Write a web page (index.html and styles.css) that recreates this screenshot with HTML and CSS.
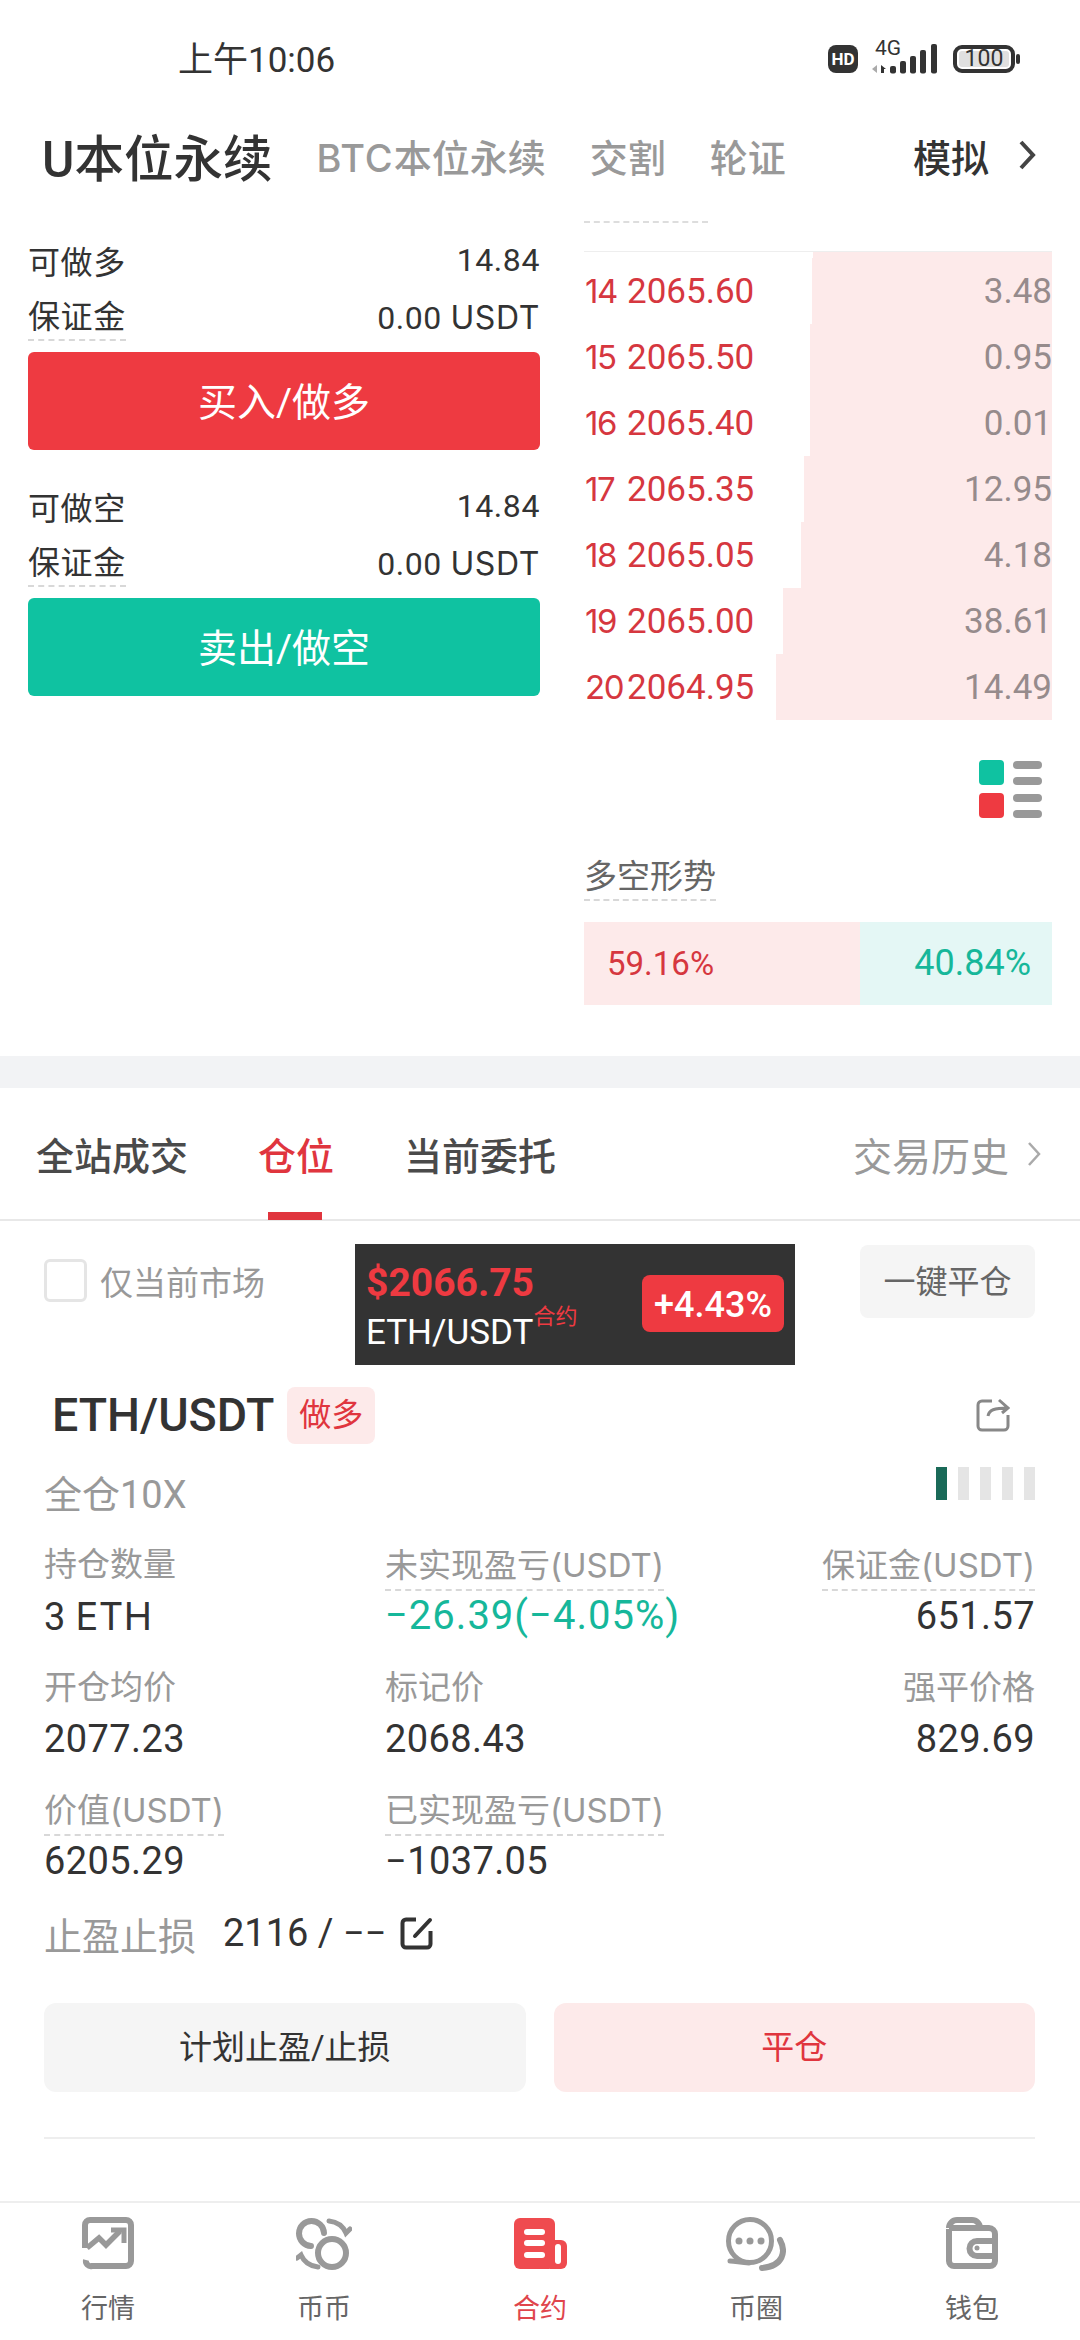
FILE: index.html
```html
<!DOCTYPE html>
<html lang="en">
<head>
    <meta charset="UTF-8">
    <meta name="viewport" content="width=device-width, initial-scale=1.0">
    <title>合约</title>
    <link rel="stylesheet" href="styles.css">
</head>
<body>
    <div class="status-bar">
        <span class="time">上午10:06</span>
        <div class="status-icons">
            <span class="hd">HD</span>
            <div class="signal">
                <span class="signal-text">4G</span>
                <svg width="66" height="34" viewBox="0 0 66 34">
                    <polygon points="0,29 5,25 5,33" fill="#aaa"/>
                    <polygon points="9,25 14,29 12,29 12,33 9,33" fill="#333"/>
                    <rect x="18" y="26" width="6" height="7.5" rx="2" fill="#333"/>
                    <rect x="28" y="21" width="6" height="12.5" rx="2" fill="#333"/>
                    <rect x="38" y="16" width="6" height="17.5" rx="2" fill="#333"/>
                    <rect x="48" y="10" width="6" height="23.5" rx="2" fill="#333"/>
                    <rect x="59" y="4" width="6" height="29.5" rx="2" fill="#333"/>
                </svg>
            </div>
            <div class="battery">
                <span class="battery-level">100</span>
            </div>
            <span class="battery-nub"></span>
        </div>
    </div>

    <div class="top-tabs">
        <span class="top-tab-main">U本位永续</span>
        <span class="top-tab"><span class="en">BTC</span>本位永续</span>
        <span class="top-tab">交割</span>
        <span class="top-tab">轮证</span>
        <span class="top-tab-demo">模拟</span>
        <svg class="top-chevron" width="18" height="32" viewBox="0 0 18 32">
            <path d="M3 3 L15 16 L3 29" fill="none" stroke="#444" stroke-width="4"/>
        </svg>
    </div>

    <div class="market">
        <div class="trade-col">
            <div class="trade-group">
                <div class="trade-row"><span>可做多</span><span>14.84</span></div>
                <div class="trade-row"><span class="dashed">保证金</span><span>0.00 <span class="en">USDT</span></span></div>
                <div class="trade-btn buy">买入/做多</div>
            </div>
            <div class="trade-group">
                <div class="trade-row"><span>可做空</span><span>14.84</span></div>
                <div class="trade-row"><span class="dashed">保证金</span><span>0.00 <span class="en">USDT</span></span></div>
                <div class="trade-btn sell">卖出/做空</div>
            </div>
        </div>

        <div class="book-col">
            <div class="book-stub"></div>
            <div class="book">
                <div class="book-sliver"><span class="depth" style="width: 239px"></span></div>
                <div class="book-row"><span class="depth" style="width: 240px"></span><span class="book-no">14</span><span class="book-price">2065.60</span><span class="book-qty">3.48</span></div>
                <div class="book-row"><span class="depth" style="width: 242px"></span><span class="book-no">15</span><span class="book-price">2065.50</span><span class="book-qty">0.95</span></div>
                <div class="book-row"><span class="depth" style="width: 242px"></span><span class="book-no">16</span><span class="book-price">2065.40</span><span class="book-qty">0.01</span></div>
                <div class="book-row"><span class="depth" style="width: 248px"></span><span class="book-no">17</span><span class="book-price">2065.35</span><span class="book-qty">12.95</span></div>
                <div class="book-row"><span class="depth" style="width: 251px"></span><span class="book-no">18</span><span class="book-price">2065.05</span><span class="book-qty">4.18</span></div>
                <div class="book-row"><span class="depth" style="width: 269px"></span><span class="book-no">19</span><span class="book-price">2065.00</span><span class="book-qty">38.61</span></div>
                <div class="book-row"><span class="depth" style="width: 276px"></span><span class="book-no">20</span><span class="book-price">2064.95</span><span class="book-qty">14.49</span></div>
            </div>
            <svg class="book-mode" width="63" height="58" viewBox="0 0 63 58">
                <rect x="0" y="0" width="25" height="25" rx="4" fill="#0fc2a1"/>
                <rect x="0" y="33" width="25" height="25" rx="4" fill="#ee3a41"/>
                <rect x="34" y="1" width="29" height="8" rx="4" fill="#999"/>
                <rect x="34" y="17" width="29" height="8" rx="4" fill="#999"/>
                <rect x="34" y="34" width="29" height="8" rx="4" fill="#999"/>
                <rect x="34" y="50" width="29" height="8" rx="4" fill="#999"/>
            </svg>
            <div class="trend-title"><span class="dashed">多空形势</span></div>
            <div class="trend-bar">
                <div class="trend-long" style="width: 276px">59.16%</div>
                <div class="trend-short">40.84%</div>
            </div>
        </div>
    </div>

    <div class="band"></div>

    <div class="order-tabs">
        <span class="order-tab">全站成交</span>
        <span class="order-tab active">仓位</span>
        <span class="order-tab">当前委托</span>
        <span class="order-history">交易历史</span>
        <svg class="history-chevron" width="14" height="26" viewBox="0 0 14 26">
            <path d="M2 2 L12 13 L2 24" fill="none" stroke="#aaa" stroke-width="2.5"/>
        </svg>
    </div>

    <div class="toolbar">
        <label class="only-market"><span class="checkbox"></span>仅当前市场</label>
        <!-- floating price ticker -->
        <div class="ticker">
            <div>
                <div class="ticker-price">$2066.75</div>
                <div class="ticker-name">ETH/USDT<sup>合约</sup></div>
            </div>
            <span class="ticker-change">+4.43%</span>
        </div>
        <span class="close-all">一键平仓</span>
    </div>

    <div class="position">
        <div class="pos-head">
            <span class="pos-name">ETH/USDT</span>
            <span class="pos-tag">做多</span>
            <svg class="pos-share" width="34" height="34" viewBox="0 0 34 34">
                <path d="M16 3 H6 a4 4 0 0 0 -4 4 V28 a4 4 0 0 0 4 4 H28 a4 4 0 0 0 4 -4 V17" fill="none" stroke="#888" stroke-width="3"/>
                <path d="M12 18 C13 12 18 10 32 10 M23 2 L32 10 L26 15" fill="none" stroke="#888" stroke-width="3"/>
            </svg>
        </div>
        <div class="pos-mode">
            <span>全仓10X</span>
            <div class="risk-bars">
                <span class="risk-bar on"></span>
                <span class="risk-bar"></span>
                <span class="risk-bar"></span>
                <span class="risk-bar"></span>
                <span class="risk-bar"></span>
            </div>
        </div>

        <div class="stats">
            <div class="stat">
                <div class="stat-label"><span>持仓数量</span></div>
                <div class="stat-value">3 <span class="en">ETH</span></div>
            </div>
            <div class="stat">
                <div class="stat-label"><span class="dashed">未实现盈亏<span class="en">(USDT)</span></span></div>
                <div class="stat-value green">−26.39(−4.05%)</div>
            </div>
            <div class="stat right">
                <div class="stat-label"><span class="dashed">保证金<span class="en">(USDT)</span></span></div>
                <div class="stat-value">651.57</div>
            </div>
            <div class="stat">
                <div class="stat-label"><span>开仓均价</span></div>
                <div class="stat-value">2077.23</div>
            </div>
            <div class="stat">
                <div class="stat-label"><span>标记价</span></div>
                <div class="stat-value">2068.43</div>
            </div>
            <div class="stat right">
                <div class="stat-label"><span>强平价格</span></div>
                <div class="stat-value">829.69</div>
            </div>
            <div class="stat">
                <div class="stat-label"><span class="dashed">价值<span class="en">(USDT)</span></span></div>
                <div class="stat-value">6205.29</div>
            </div>
            <div class="stat">
                <div class="stat-label"><span class="dashed">已实现盈亏<span class="en">(USDT)</span></span></div>
                <div class="stat-value">−1037.05</div>
            </div>
        </div>

        <div class="stop-row">
            <span class="stop-label">止盈止损</span>
            <span class="stop-value">2116 / −−</span>
            <svg width="33" height="33" viewBox="0 0 33 33">
                <path d="M16 2.5 H6 a3.5 3.5 0 0 0 -3.5 3.5 V27 a3.5 3.5 0 0 0 3.5 3.5 H27 a3.5 3.5 0 0 0 3.5 -3.5 V14" fill="none" stroke="#333" stroke-width="4"/>
                <path d="M15 19 L30 3" fill="none" stroke="#333" stroke-width="4" stroke-linecap="round"/>
            </svg>
        </div>

        <div class="pos-actions">
            <div class="pos-btn plan">计划止盈/止损</div>
            <div class="pos-btn close">平仓</div>
        </div>
        <div class="pos-divider"></div>
    </div>

    <div class="bottom-nav">
        <div class="nav-item">
            <svg width="52" height="54" viewBox="0 0 52 54">
                <path d="M3 31 V8 a5 5 0 0 1 5 -5 H44 a5 5 0 0 1 5 5 V44 a5 5 0 0 1 -5 5 H10 a5 5 0 0 1 -6 -6" fill="none" stroke="#999" stroke-width="6"/>
                <path d="M5 31 L17 21 L24 28 L38 14" fill="none" stroke="#999" stroke-width="5.5"/>
                <path d="M29 13 H42 V26" fill="none" stroke="#999" stroke-width="5"/>
            </svg>
            <span>行情</span>
        </div>
        <div class="nav-item">
            <svg width="56" height="54" viewBox="0 0 56 54">
                <circle cx="36" cy="36" r="14" fill="none" stroke="#999" stroke-width="6"/>
                <path d="M28 16 A12.5 12.5 0 1 0 15 29" fill="none" stroke="#999" stroke-width="6" stroke-linecap="round"/>
                <path d="M33 4 C42 5 47 9 50 16 L54 12" fill="none" stroke="#999" stroke-width="5" stroke-linecap="round"/>
                <path d="M22 50 C13 49 8 45 5 38 L1 41" fill="none" stroke="#999" stroke-width="5" stroke-linecap="round"/>
            </svg>
            <span>币币</span>
        </div>
        <div class="nav-item active">
            <svg width="53" height="54" viewBox="0 0 53 54">
                <rect x="0" y="1" width="41" height="51" rx="6" fill="#ef4b4f"/>
                <path d="M36 23 H47 a6 6 0 0 1 6 6 V46 a6 6 0 0 1 -6 6 H36 Z" fill="#ef4b4f"/>
                <rect x="10" y="12" width="21" height="6" rx="3" fill="#fff"/>
                <rect x="10" y="23" width="21" height="6" rx="3" fill="#fff"/>
                <rect x="10" y="35" width="21" height="6" rx="3" fill="#fff"/>
                <rect x="41" y="27" width="6" height="20" rx="3" fill="#fff"/>
            </svg>
            <span>合约</span>
        </div>
        <div class="nav-item">
            <svg width="60" height="54" viewBox="0 0 60 54">
                <circle cx="24" cy="24" r="21.5" fill="none" stroke="#999" stroke-width="5"/>
                <path d="M4 44 C10 44 15 46 23 46" fill="none" stroke="#999" stroke-width="5" stroke-linecap="round"/>
                <circle cx="13" cy="24" r="3.5" fill="#999"/>
                <circle cx="24" cy="24" r="3.5" fill="#999"/>
                <circle cx="35" cy="24" r="3.5" fill="#999"/>
                <path d="M54 23 C60 34 58 49 36 51" fill="none" stroke="#999" stroke-width="6" stroke-linecap="round"/>
            </svg>
            <span>币圈</span>
        </div>
        <div class="nav-item">
            <svg width="52" height="54" viewBox="0 0 52 54">
                <path d="M3 11 a8 8 0 0 1 8 -8 H26 a8 8 0 0 1 8 8" fill="none" stroke="#999" stroke-width="6"/>
                <path d="M3 12 V44 a5 5 0 0 0 5 5 H44 a5 5 0 0 0 5 -5 V17 a6 6 0 0 0 -6 -6 H3" fill="none" stroke="#999" stroke-width="6"/>
                <path d="M49 24 H31 a7.5 7.5 0 0 0 0 15 H49" fill="none" stroke="#999" stroke-width="6"/>
                <circle cx="31" cy="31" r="2.5" fill="#999"/>
            </svg>
            <span>钱包</span>
        </div>
    </div>
</body>
</html>
```

FILE: styles.css
```css
* {
    box-sizing: border-box;
}
body {
    margin: 0;
    width: 1080px;
    height: 2340px;
    overflow: hidden;
    display: flex;
    flex-direction: column;
    background: #fff;
    color: #333;
    font-family: Roboto, "Noto Sans CJK SC", sans-serif;
}
.dashed {
    display: inline-block;
    border-bottom: 2px dashed #d8d8d8;
}
/* capitals in the original run wider than Roboto */
.en {
    font-family: Inter, Roboto, sans-serif;
}

/* status bar */
.status-bar {
    height: 120px;
    padding: 40px 60px 0 178px;
    display: flex;
    justify-content: space-between;
    align-items: flex-start;
}
.time {
    font-size: 35px;
    line-height: 42px;
}
.status-icons {
    display: flex;
    align-items: flex-start;
}
.hd {
    width: 30px;
    height: 28px;
    margin-top: 5px;
    border-radius: 8px;
    background: #333;
    color: #fff;
    font-size: 17px;
    font-weight: 700;
    line-height: 28px;
    text-align: center;
}
.signal {
    position: relative;
    height: 34px;
    margin-left: 14px;
}
.signal svg {
    display: block;
}
.signal-text {
    position: absolute;
    left: 3px;
    top: 0;
    font-size: 21px;
    line-height: 17px;
}
.battery {
    width: 62px;
    height: 28px;
    margin: 5px 0 0 15px;
    padding: 2px;
    border: 4px solid #333;
    border-radius: 9px;
    display: flex;
}
.battery-level {
    flex: 1;
    background: #e0e0e0;
    border-radius: 3px;
    font-size: 23px;
    line-height: 16px;
    text-align: center;
}
.battery-nub {
    width: 4px;
    height: 10px;
    margin: 14px 0 0 1px;
    background: #333;
    border-radius: 2px;
}

/* top tabs */
.top-tabs {
    height: 80px;
    padding: 0 44px 10px 42px;
    display: flex;
    align-items: center;
    gap: 44px;
}
.top-tab-main {
    font-size: 49.5px;
    font-weight: 500;
}
.top-tab {
    font-size: 38px;
    font-weight: 500;
    color: #999;
}
.top-tab .en {
    letter-spacing: 1px;
}
.top-tab-demo {
    margin-left: auto;
    font-size: 38px;
    font-weight: 500;
}
.top-chevron {
    margin-left: -15px;
}

/* trade buttons + order book */
.market {
    height: 856px;
    padding: 0 28px;
    display: flex;
    justify-content: space-between;
}
.trade-col {
    width: 512px;
    padding-top: 32px;
}
.trade-group {
    margin-bottom: 28px;
}
.trade-row {
    height: 56px;
    display: flex;
    justify-content: space-between;
    align-items: center;
    font-size: 32px;
    letter-spacing: 0.6px;
}
.trade-row + .trade-row {
    padding-top: 3px;
}
.trade-row .dashed {
    line-height: 44px;
}
.trade-btn {
    height: 98px;
    margin-top: 8px;
    border-radius: 6px;
    color: #fff;
    font-size: 39px;
    line-height: 102px;
    text-align: center;
}
.buy {
    background: #ee3a41;
}
.sell {
    background: #0fc2a1;
}
.book-col {
    width: 468px;
}
.book-stub {
    width: 124px;
    height: 23px;
    border-bottom: 2px dashed #ddd;
}
.book {
    margin-top: 28px;
    border-top: 1px solid #eee;
}
.book-sliver {
    position: relative;
    height: 6px;
}
.book-row {
    position: relative;
    height: 66px;
    display: flex;
    align-items: center;
    font-size: 35px;
}
.depth {
    position: absolute;
    top: 0;
    right: 0;
    bottom: 0;
    background: #fdeaea;
}
.book-no,
.book-price,
.book-qty {
    position: relative;
}
.book-no {
    width: 43px;
    padding-left: 1px;
    font-family: Inter, Roboto, sans-serif;
    font-size: 33px;
    letter-spacing: -1.5px;
    color: #d6373f;
}
.book-price {
    color: #d6373f;
}
.book-qty {
    margin-left: auto;
    color: #968b8c;
}
.book-mode {
    display: block;
    margin: 40px 10px 0 auto;
}
.trend-title {
    height: 47px;
    margin-top: 36px;
    font-size: 33px;
    line-height: 45px;
    color: #666;
}
.trend-bar {
    height: 83px;
    margin-top: 21px;
    display: flex;
    font-size: 33px;
    line-height: 83px;
}
.trend-long {
    padding-left: 23px;
    background: #fdeaea;
    color: #d6373f;
}
.trend-short {
    flex: 1;
    padding-right: 21px;
    background: #e4f7f5;
    color: #16b79a;
    font-size: 36px;
    text-align: right;
}
.band {
    height: 32px;
    background: #f2f3f5;
}

/* position tabs */
.order-tabs {
    height: 133px;
    padding: 0 39px 0 36px;
    border-bottom: 2px solid #e8e8e8;
    display: flex;
    align-items: center;
    gap: 70px;
}
.order-tab {
    position: relative;
    font-size: 38px;
    font-weight: 500;
    color: #4a4a4a;
}
.order-tab.active {
    color: #e0353e;
}
.order-tab.active::after {
    content: "";
    position: absolute;
    left: 10px;
    right: 12px;
    bottom: -39px;
    height: 8px;
    background: #e0353e;
}
.order-history {
    margin-left: auto;
    font-size: 39px;
    color: #999;
}
.history-chevron {
    margin-left: -52px;
}

/* filter row */
.toolbar {
    position: relative;
    height: 159px;
    padding: 24px 45px 0 44px;
    display: flex;
    justify-content: space-between;
    align-items: flex-start;
}
.only-market {
    height: 71px;
    display: flex;
    align-items: center;
    gap: 13px;
    font-size: 33px;
    color: #999;
}
.checkbox {
    width: 43px;
    height: 43px;
    border: 3px solid #e5e5e5;
    border-radius: 6px;
}
.ticker {
    position: absolute;
    left: 355px;
    top: 23px;
    width: 440px;
    height: 121px;
    padding: 4px 11px 0 11px;
    background: #333;
    display: flex;
    justify-content: space-between;
    align-items: center;
}
.ticker-price {
    font-size: 39px;
    font-weight: 700;
    line-height: 52px;
    color: #ee3a41;
}
.ticker-name {
    font-size: 35px;
    line-height: 48px;
    color: #fff;
}
.ticker-name sup {
    font-size: 22px;
    line-height: 0;
    color: #ee3a41;
    vertical-align: 20px;
}
.ticker-change {
    width: 142px;
    height: 57px;
    margin-top: -6px;
    border-radius: 8px;
    background: #ee3a41;
    color: #fff;
    font-size: 36px;
    font-weight: 500;
    line-height: 60px;
    text-align: center;
}
.close-all {
    width: 175px;
    height: 73px;
    border-radius: 8px;
    background: #f5f5f5;
    color: #666;
    font-size: 32px;
    line-height: 75px;
    text-align: center;
}

/* position card */
.position {
    padding: 0 45px 0 44px;
}
.pos-head {
    height: 70px;
    padding-left: 8px;
    display: flex;
    align-items: center;
}
.pos-name {
    font-size: 46.5px;
    font-weight: 500;
}
.pos-tag {
    width: 88px;
    height: 57px;
    margin-left: 13px;
    border-radius: 8px;
    background: #fdeaea;
    color: #e0353e;
    font-size: 32px;
    line-height: 57px;
    text-align: center;
}
.pos-share {
    margin: 0 25px 0 auto;
}
.pos-mode {
    height: 56px;
    margin-top: 15px;
    display: flex;
    justify-content: space-between;
    font-size: 38px;
    line-height: 60px;
    color: #999;
}
.risk-bars {
    margin-top: 2px;
    display: flex;
    gap: 11px;
}
.risk-bar {
    width: 11px;
    height: 33px;
    background: #e5e5e5;
}
.risk-bar.on {
    background: #1a6a58;
}
.stats {
    margin-top: 19px;
    display: grid;
    grid-template-columns: 341px 1fr auto;
    row-gap: 20px;
}
.stat-label {
    height: 50px;
    padding-top: 2px;
    font-size: 33px;
    line-height: 46px;
    color: #999;
}
.stat-value {
    font-size: 38px;
    letter-spacing: 0.4px;
    line-height: 52px;
}
.stat-value.green {
    font-size: 40px;
    letter-spacing: 1px;
    color: #16b79a;
}
.stat.right {
    text-align: right;
}
.stop-row {
    height: 50px;
    margin-top: 21px;
    margin-bottom: 1px;
    display: flex;
    align-items: center;
    font-size: 38px;
}
.stop-label {
    color: #999;
}
.stop-value {
    margin: 0 14px 0 27px;
}
.pos-actions {
    margin-top: 45px;
    display: grid;
    grid-template-columns: 1fr 1fr;
    gap: 28px;
}
.pos-btn {
    height: 89px;
    border-radius: 12px;
    font-size: 33px;
    line-height: 90px;
    text-align: center;
}
.plan {
    background: #f5f5f5;
}
.close {
    background: #fdeaea;
    color: #e0353e;
}
.pos-divider {
    margin-top: 45px;
    border-top: 2px solid #eee;
}

/* bottom nav */
.bottom-nav {
    margin-top: auto;
    height: 139px;
    border-top: 2px solid #eee;
    padding-top: 14px;
    display: grid;
    grid-template-columns: repeat(5, 1fr);
}
.nav-item {
    display: flex;
    flex-direction: column;
    align-items: center;
    font-size: 27px;
    line-height: 40px;
    color: #666;
}
.nav-item span {
    margin-top: 18px;
}
.nav-item.active {
    color: #e0454c;
}
```
